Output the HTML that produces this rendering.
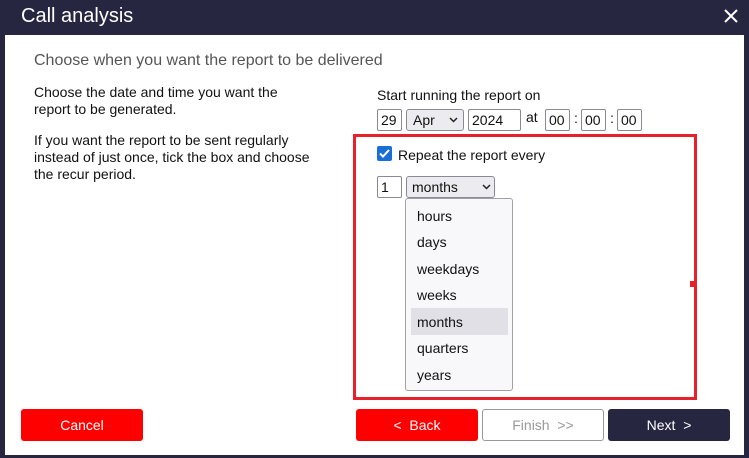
<!DOCTYPE html>
<html><head><style>
*{margin:0;padding:0;box-sizing:border-box}
body{width:749px;height:458px;background:#262640;font-family:"Liberation Sans",sans-serif;position:relative;overflow:hidden;color:#111}
.a{position:absolute}
.title{left:21px;top:5px;color:#fff;font-size:20px}
.body{left:5px;top:35px;width:739px;height:420px;background:#fff}
.t{font-size:14px;line-height:17px}
.box{position:absolute;border:1px solid #8a8a94;border-radius:2px;height:22px;font-size:14px;line-height:20px;padding-left:3px;background:#fff}
.sel{background:#ececf0;border-radius:3px}
.sel svg{position:absolute;top:7px}
.btn{position:absolute;top:409px;width:122px;height:32px;border-radius:3px;color:#fff;font-size:14px;text-align:center;line-height:32px}
.it{position:absolute;left:417px;font-size:14px}
</style></head><body>
<div class="a title">Call analysis</div>
<svg class="a" style="left:724px;top:9px" width="14" height="14"><path d="M1 1L13 13M13 1L1 13" stroke="#fff" stroke-width="2"/></svg>
<div class="a body"></div>
<div class="a" style="left:34px;top:52px;font-size:16px;color:#555">Choose when you want the report to be delivered</div>
<div class="a t" style="left:34px;top:84px;width:280px">Choose the date and time you want the report to be generated.</div>
<div class="a t" style="left:34px;top:132px;width:290px">If you want the report to be sent regularly instead of just once, tick the box and choose the recur period.</div>
<div class="a t" style="left:377px;top:87px">Start running the report on</div>
<div class="box" style="left:377px;top:109px;width:25px">29</div>
<div class="box sel" style="left:406px;top:109px;width:58px;padding-left:6px">Apr<svg style="left:42px" width="9" height="6"><path d="M1 1L4.5 4.5L8 1" stroke="#222" stroke-width="1.5" fill="none"/></svg></div>
<div class="box" style="left:468px;top:109px;width:53px">2024</div>
<div class="a t" style="left:526px;top:109px">at</div>
<div class="box" style="left:545px;top:109px;width:25px">00</div>
<div class="a t" style="left:574px;top:110px">:</div>
<div class="box" style="left:581px;top:109px;width:25px">00</div>
<div class="a t" style="left:610px;top:110px">:</div>
<div class="box" style="left:617px;top:109px;width:25px">00</div>
<div class="a" style="left:353px;top:134px;width:344px;height:266px;border:3px solid #e8202a"></div>
<div class="a" style="left:690px;top:281px;width:6px;height:6px;background:#e8202a"></div>
<div class="a" style="left:377px;top:146px;width:15px;height:15px;background:#1a6fd6;border-radius:2px"><svg width="15" height="15"><path d="M3 7.5L6 10.5L12 4" stroke="#fff" stroke-width="2" fill="none"/></svg></div>
<div class="a t" style="left:398px;top:147px">Repeat the report every</div>
<div class="box" style="left:377px;top:176px;width:25px">1</div>
<div class="box sel" style="left:406px;top:176px;width:89px;padding-left:5px">months<svg style="left:75px" width="9" height="6"><path d="M1 1L4.5 4.5L8 1" stroke="#222" stroke-width="1.5" fill="none"/></svg></div>
<div class="a" style="left:405px;top:198px;width:108px;height:193px;background:#f8f8fa;border:1px solid #a0a0a8;border-radius:3px"></div>
<div class="a" style="left:411px;top:308px;width:97px;height:27px;background:#e0e0e6"></div>
<div class="it" style="top:208px">hours</div>
<div class="it" style="top:234px">days</div>
<div class="it" style="top:261px">weekdays</div>
<div class="it" style="top:287px">weeks</div>
<div class="it" style="top:314px">months</div>
<div class="it" style="top:340px">quarters</div>
<div class="it" style="top:367px">years</div>
<div class="btn" style="left:21px;background:#ff0000">Cancel</div>
<div class="btn" style="left:356px;background:#ff0000">&lt;&nbsp; Back</div>
<div class="btn" style="left:482px;background:#fff;border:1px solid #999;color:#999;line-height:30px">Finish &nbsp;&gt;&gt;</div>
<div class="btn" style="left:608px;background:#262640">Next &nbsp;&gt;</div>
</body></html>
